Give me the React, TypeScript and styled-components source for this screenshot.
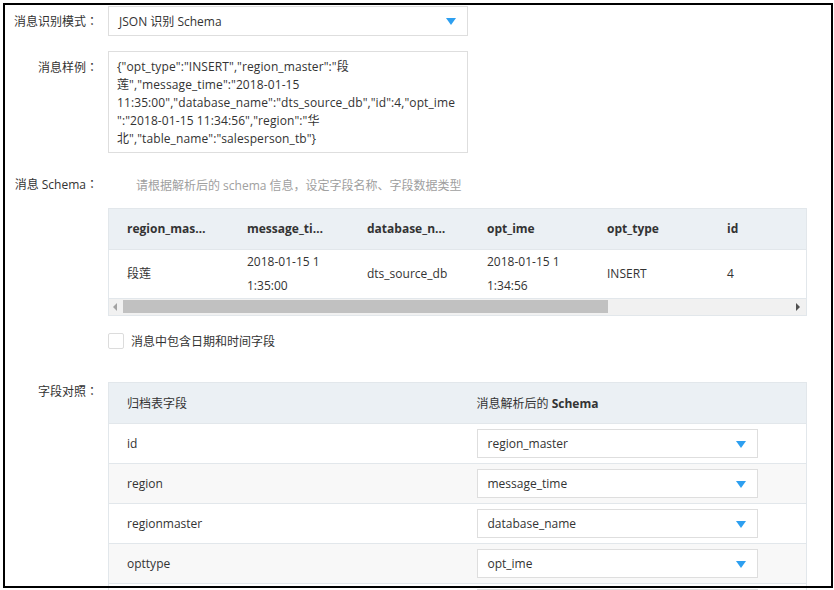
import React from "react";
import styled, { createGlobalStyle } from "styled-components";

const GlobalStyle = createGlobalStyle`
  html, body {
    margin: 0;
    padding: 0;
    background: #ffffff;
  }
  body {
    font-family: "Open Sans", "Noto Sans CJK SC", sans-serif;
    font-size: 12px;
    color: #333333;
    overflow: hidden;
  }
  * { box-sizing: border-box; }
`;

const Frame = styled.div`
  position: fixed;
  left: 3px;
  top: 3px;
  width: 830px;
  height: 585px;
  border: 2px solid #000000;
  pointer-events: none;
  z-index: 10;
`;

const Page = styled.div`
  width: 834px;
  height: 590px;
  overflow: hidden;
  padding-top: 6px;
`;

const Row = styled.div<{ $top?: number; $align?: string }>`
  display: grid;
  grid-template-columns: 98px 1fr;
  column-gap: 10px;
  align-items: ${(p) => p.$align ?? "center"};
  margin-top: ${(p) => p.$top ?? 0}px;
`;

const Label = styled.div<{ $pt?: number }>`
  text-align: right;
  white-space: nowrap;
  color: #333333;
  line-height: 18px;
  padding-top: ${(p) => p.$pt ?? 0}px;
`;

const Colon = styled.span`
  font-family: "Noto Sans CJK TC", "Noto Sans CJK SC", sans-serif;
`;

const Content = styled.div`
  min-width: 0;
`;

const Select = styled.div<{ $w: number; $h: number }>`
  width: ${(p) => p.$w}px;
  height: ${(p) => p.$h}px;
  border: 1px solid #dedede;
  background: #ffffff;
  display: flex;
  align-items: center;
  justify-content: space-between;
  padding: 0 11px 0 10px;
  color: #333333;
`;

const Caret = styled.span`
  width: 0;
  height: 0;
  border-left: 5.5px solid transparent;
  border-right: 5.5px solid transparent;
  border-top: 7px solid #2d9ff0;
  margin-top: 1px;
`;

const SampleBox = styled.div`
  width: 360px;
  height: 102px;
  border: 1px solid #dedede;
  padding: 6px 8px 0 8px;
  line-height: 18px;
  color: #333333;
  white-space: pre;
  letter-spacing: 0.1px;
`;

const Hint = styled.span`
  color: #a0a0a0;
  margin-left: 28px;
`;

const Grid = styled.div<{ $top: number }>`
  width: 699px;
  margin-top: ${(p) => p.$top}px;
  border: 1px solid #e2e7eb;
  overflow: hidden;
`;

const PreviewTable = styled.table`
  border-collapse: collapse;
  table-layout: fixed;
  width: 720px;
`;

const PreviewHead = styled.th`
  width: 120px;
  height: 40px;
  background: #ebf0f4;
  text-align: left;
  font-weight: 700;
  padding: 0 20px 0 18px;
  white-space: nowrap;
  overflow: hidden;
  text-overflow: ellipsis;
  border-bottom: 1px solid #e2e7eb;
  color: #333333;
`;

const PreviewCell = styled.td<{ $breakAll: boolean }>`
  height: 48px;
  padding: 0 23px 0 18px;
  line-height: 24px;
  word-break: ${(p) => (p.$breakAll ? "break-all" : "normal")};
  white-space: ${(p) => (p.$breakAll ? "normal" : "nowrap")};
  vertical-align: middle;
  color: #333333;
`;

const Scrollbar = styled.div`
  height: 17px;
  background: #f1f1f1;
  border-top: 1px solid #e2e7eb;
  display: flex;
  align-items: center;
  padding: 0 6px 0 4px;
`;

const ScrollArrow = styled.span<{ $dir: "left" | "right" }>`
  width: 0;
  height: 0;
  border-top: 4px solid transparent;
  border-bottom: 4px solid transparent;
  ${(p) =>
    p.$dir === "left"
      ? "border-right: 4px solid #a3a3a3;"
      : "border-left: 4px solid #505050;"}
`;

const Track = styled.div`
  flex: 1;
  height: 15px;
  margin: 0 7px 0 6px;
  display: flex;
  align-items: center;
`;

const Thumb = styled.div`
  height: 13px;
  background: #c1c1c1;
`;

const CheckRow = styled.label`
  display: flex;
  align-items: center;
  gap: 7px;
  margin-top: 16px;
  color: #333333;
`;

const CheckBox = styled.span`
  width: 16px;
  height: 16px;
  border: 1px solid #dcdcdc;
  border-radius: 2px;
  background: #fff;
`;

const MapTable = styled.table`
  border-collapse: collapse;
  table-layout: fixed;
  width: 100%;
`;

const MapHead = styled.th`
  height: 41px;
  background: #ebf0f4;
  text-align: left;
  font-weight: 700;
  padding: 0 0 0 18px;
  border-bottom: 1px solid #e2e7eb;
  color: #333333;
  &:last-child { padding-left: 19px; }
`;

const Plain = styled.span`
  font-weight: 400;
`;

const MapRow = styled.tr<{ $striped: boolean }>`
  background: ${(p) => (p.$striped ? "#f8f8f8" : "#ffffff")};
  border-bottom: 1px solid #e2e7eb;
`;

const MapCell = styled.td`
  height: 40px;
  padding: 0 0 0 18px;
  vertical-align: middle;
  color: #333333;
  &:last-child { padding-left: 19px; }
`;

const sampleLines = [
  '{"opt_type":"INSERT","region_master":"段',
  '莲","message_time":"2018-01-15',
  '11:35:00","database_name":"dts_source_db","id":4,"opt_ime',
  '":"2018-01-15 11:34:56","region":"华',
  '北","table_name":"salesperson_tb"}',
];

const previewCols = [
  { key: "region_master", value: "段莲", wrap: false },
  { key: "message_time", value: "2018-01-15 11:35:00", wrap: true },
  { key: "database_name", value: "dts_source_db", wrap: false },
  { key: "opt_ime", value: "2018-01-15 11:34:56", wrap: true },
  { key: "opt_type", value: "INSERT", wrap: false },
  { key: "id", value: "4", wrap: false },
];

const mappings = [
  { field: "id", schema: "region_master" },
  { field: "region", schema: "message_time" },
  { field: "regionmaster", schema: "database_name" },
  { field: "opttype", schema: "opt_ime" },
  { field: "", schema: "" },
];

const thumbRatio = 0.728;

export default function App() {
  return (
    <>
      <GlobalStyle />
      <Frame />
      <Page>
        <Row>
          <Label>
            消息识别模式<Colon>：</Colon>
          </Label>
          <Content>
            <Select $w={360} $h={30}>
              <span>JSON 识别 Schema</span>
              <Caret />
            </Select>
          </Content>
        </Row>

        <Row $top={15} $align="start">
          <Label $pt={7}>
            消息样例<Colon>：</Colon>
          </Label>
          <Content>
            <SampleBox>{sampleLines.join("\n")}</SampleBox>
          </Content>
        </Row>

        <Row $top={22}>
          <Label>
            消息 Schema<Colon>：</Colon>
          </Label>
          <Content>
            <Hint>请根据解析后的 schema 信息，设定字段名称、字段数据类型</Hint>
          </Content>
        </Row>

        <Row $align="start">
          <div />
          <Content>
            <Grid $top={14}>
              <PreviewTable>
                <thead>
                  <tr>
                    {previewCols.map((c) => (
                      <PreviewHead key={c.key}>{c.key}</PreviewHead>
                    ))}
                  </tr>
                </thead>
                <tbody>
                  <tr>
                    {previewCols.map((c) => (
                      <PreviewCell key={c.key} $breakAll={c.wrap}>
                        {c.value}
                      </PreviewCell>
                    ))}
                  </tr>
                </tbody>
              </PreviewTable>
              <Scrollbar>
                <ScrollArrow $dir="left" />
                <Track>
                  <Thumb style={{ width: `${thumbRatio * 100}%` }} />
                </Track>
                <ScrollArrow $dir="right" />
              </Scrollbar>
            </Grid>
            <CheckRow>
              <CheckBox />
              <span>消息中包含日期和时间字段</span>
            </CheckRow>
          </Content>
        </Row>

        <Row $top={32} $align="start">
          <Label>
            字段对照<Colon>：</Colon>
          </Label>
          <Content>
            <Grid $top={0}>
              <MapTable>
                <thead>
                  <tr>
                    <MapHead>
                      <Plain>归档表字段</Plain>
                    </MapHead>
                    <MapHead>
                      <Plain>消息解析后的</Plain> Schema
                    </MapHead>
                  </tr>
                </thead>
                <tbody>
                  {mappings.map((m, i) => (
                    <MapRow key={i} $striped={i % 2 === 1}>
                      <MapCell>{m.field}</MapCell>
                      <MapCell>
                        <Select $w={281} $h={29}>
                          <span>{m.schema}</span>
                          <Caret />
                        </Select>
                      </MapCell>
                    </MapRow>
                  ))}
                </tbody>
              </MapTable>
            </Grid>
          </Content>
        </Row>
      </Page>
    </>
  );
}
